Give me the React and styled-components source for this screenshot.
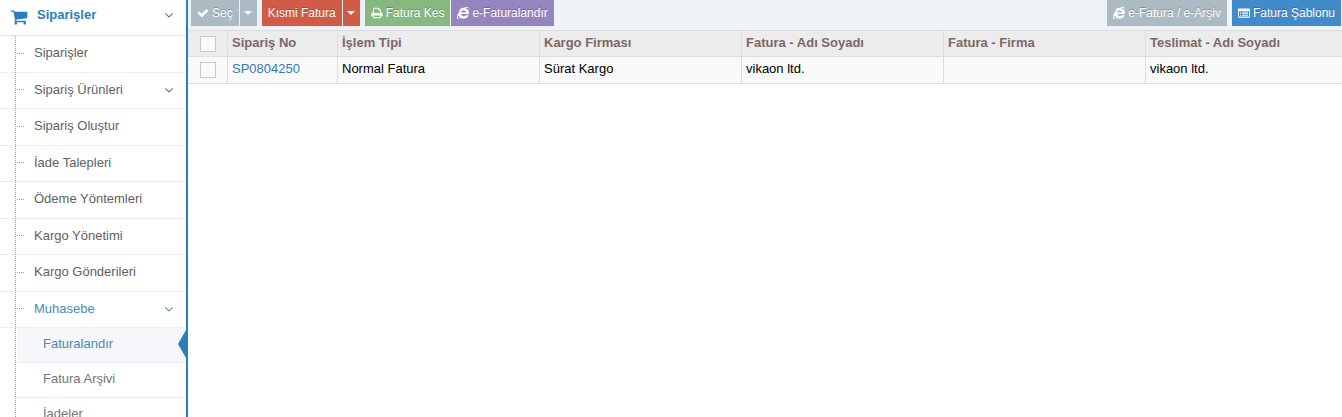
import React, { useState } from 'react';
import styled, { createGlobalStyle } from 'styled-components';
import { FaInternetExplorer } from 'react-icons/fa';

const GlobalStyle = createGlobalStyle`
  * {
    box-sizing: border-box;
  }

  body {
    margin: 0;
    background: #fff;
    color: #000;
    font-family: 'Liberation Sans', Arial, sans-serif;
    font-size: 13px;
    line-height: 20px;
  }
`;

const Page = styled.div`
  display: flex;
  height: 100vh;
  overflow: hidden;
`;

const Svg = styled.svg`
  width: ${({ $size }) => $size}px;
  height: ${({ $size }) => $size}px;
  fill: currentColor;
  flex-shrink: 0;
`;

const Sidebar = styled.nav`
  flex: 0 0 188px;
  border-right: 2px solid #2b7dbc;
  overflow: hidden;
`;

const SidebarHeader = styled.a`
  display: flex;
  align-items: center;
  gap: 9px;
  height: 36px;
  padding: 0 10px 6px;
  border-bottom: 1px solid #e5e5e5;
  color: #2b7dbc;
  font-weight: 700;
  text-decoration: none;
`;

const HeaderIcon = styled.span`
  display: flex;
  padding-top: 4px;
`;

const MenuLabel = styled.span`
  flex: 1;
`;

const Menu = styled.ul`
  position: relative;
  margin: 0;
  padding: 0;
  list-style: none;

  &::before {
    content: '';
    position: absolute;
    top: 0;
    bottom: 0;
    left: 15px;
    border-left: 1px dotted #7fa9ca;
  }
`;

const MenuItem = styled.li`
  &:nth-child(odd) > a {
    height: 37px;
  }
`;

const MenuLink = styled.a`
  display: flex;
  align-items: center;
  height: 36px;
  padding: 0 10px 2px 17px;
  border-bottom: 1px dotted #e0e0e0;
  color: ${({ $active }) => ($active ? '#4b88b7' : '#616161')};
  text-decoration: none;

  &::before {
    content: '';
    width: 7px;
    margin-right: 10px;
    border-top: 1px dotted #7fa9ca;
  }

  &:hover {
    color: #4b88b7;
  }
`;

const SubMenu = styled.ul`
  margin: 0 0 0 17px;
  padding: 0;
  list-style: none;
`;

const SubLink = styled.a`
  position: relative;
  display: flex;
  align-items: center;
  height: 35px;
  padding: 0 0 2px 26px;
  border-bottom: 1px dotted #e0e0e0;
  background: ${({ $active }) => ($active ? '#f5f7fa' : '#fff')};
  color: ${({ $active }) => ($active ? '#4b88b7' : '#757575')};
  text-decoration: none;
`;

const ActiveArrow = styled.span`
  position: absolute;
  top: 2px;
  right: 0;
  border-style: solid;
  border-width: 14px 8px 14px 0;
  border-color: transparent #2b7dbc;
`;

const Content = styled.main`
  flex: 1;
  min-width: 0;
  overflow: hidden;
`;

const Toolbar = styled.div`
  display: flex;
  justify-content: space-between;
  height: 30px;
  padding: 0 1px 4px 3px;
  background: #eff3f8;
`;

const ToolGroup = styled.div`
  display: flex;
  gap: 5px;
`;

const ButtonGroup = styled.div`
  display: flex;
  gap: 1px;
`;

const Button = styled.button`
  display: flex;
  align-items: center;
  gap: 3px;
  height: 26px;
  padding: 0 6px;
  border: 0;
  background: ${({ $color }) => $color};
  color: #fff;
  font: 12px 'Liberation Sans', Arial, sans-serif;
  text-shadow: 0 -1px 0 rgba(0, 0, 0, 0.25);
  white-space: nowrap;
  cursor: pointer;

  &:hover {
    filter: brightness(0.92);
  }
`;

const CaretButton = styled(Button)`
  justify-content: center;
  width: 17px;
  padding: 0;
`;

const Caret = styled.span`
  border-style: solid;
  border-width: 4px 4px 0;
  border-color: #fff transparent;
`;

const Table = styled.table`
  width: 100%;
  border-collapse: separate;
  border-spacing: 0;
  border-top: 1px solid #ddd;
  table-layout: fixed;
`;

const Col = styled.col`
  width: ${({ $width }) => ($width ? `${$width}px` : 'auto')};
`;

const HeadCell = styled.th`
  height: 26px;
  padding: 0 4px 2px;
  border-right: 1px solid #ddd;
  border-bottom: 1px solid #ddd;
  background: #ececec;
  color: #7d6767;
  text-align: left;
  white-space: nowrap;

  &:last-child {
    border-right: 0;
  }
`;

const Cell = styled.td`
  height: 27px;
  padding: 0 4px 2px;
  border-right: 1px solid #ddd;
  border-bottom: 1px solid #ddd;
  background: #f9f9f9;
  white-space: nowrap;

  &:last-child {
    border-right: 0;
  }
`;

const CheckLabel = styled.label`
  display: flex;
  justify-content: center;
  padding-top: 2px;
`;

const Checkbox = styled.input`
  appearance: none;
  width: 16px;
  height: 16px;
  margin: 0;
  border: 1px solid #c8c8c8;
  background: #fafafa;
  cursor: pointer;

  &:checked {
    background: #32a3ce;
  }
`;

const OrderLink = styled.a`
  color: #337ab7;
  text-decoration: none;
`;

const icons = {
  cart: 'M704 1536q0 52-38 90t-90 38-90-38-38-90 38-90 90-38 90 38 38 90zm896 0q0 52-38 90t-90 38-90-38-38-90 38-90 90-38 90 38 38 90zm128-1088v512q0 24-16.5 42.5t-40.5 21.5l-1044 122q13 60 13 70 0 16-24 64h920q26 0 45 19t19 45-19 45-45 19h-1024q-26 0-45-19t-19-45q0-11 8-31.5t16-36 21.5-40 15.5-29.5l-177-823h-204q-26 0-45-19t-19-45 19-45 45-19h256q16 0 28.5 6.5t19.5 15.5 13 24.5 8 26 5.5 29.5 4.5 26h1201q26 0 45 19t19 45z',
  angle: 'M1395 736q0 13-10 23l-466 466q-10 10-23 10t-23-10l-466-466q-10-10-10-23t10-23l50-50q10-10 23-10t23 10l393 393 393-393q10-10 23-10t23 10l50 50q10 10 10 23z',
  check: 'M1671 566q0 40-28 68l-724 724-136 136q-28 28-68 28t-68-28l-136-136-362-362q-28-28-28-68t28-68l136-136q28-28 68-28t68 28l294 295 656-657q28-28 68-28t68 28l136 136q28 28 28 68z',
  print: 'M448 1536h896v-256h-896v256zm0-640h896v-384h-160q-40 0-68-28t-28-68v-160h-640v640zm1152 64q0-26-19-45t-45-19-45 19-19 45 19 45 45 19 45-19 19-45zm128 0v416q0 13-9.5 22.5t-22.5 9.5h-224v160q0 40-28 68t-68 28h-960q-40 0-68-28t-28-68v-160h-224q-13 0-22.5-9.5t-9.5-22.5v-416q0-79 56.5-135.5t135.5-56.5h64v-544q0-40 28-68t68-28h672q40 0 88 20t76 48l152 152q28 28 48 76t20 88v256h64q79 0 135.5 56.5t56.5 135.5z',
  list: 'M160 224h1472q160 0 160 160v1056q0 160-160 160H160Q0 1600 0 1440V384Q0 224 160 224zM149 597v810q0 32 32 32h1430q32 0 32-32V597zM299 672h149v149H299zM597 672h896v149H597zM299 950h149v149H299zM597 950h896v149H597zM299 1220h149v149H299zM597 1220h896v149H597z',
};

const Icon = ({ name, size }) => (
  <Svg viewBox="0 0 1792 1792" $size={size} aria-hidden="true">
    <path d={icons[name]} fillRule={name === 'list' ? 'evenodd' : 'nonzero'} />
  </Svg>
);

const menuItems = [
  { label: 'Siparişler' },
  { label: 'Sipariş Ürünleri', expandable: true },
  { label: 'Sipariş Oluştur' },
  { label: 'İade Talepleri' },
  { label: 'Ödeme Yöntemleri' },
  { label: 'Kargo Yönetimi' },
  { label: 'Kargo Gönderileri' },
  {
    label: 'Muhasebe',
    expandable: true,
    active: true,
    children: ['Faturalandır', 'Fatura Arşivi', 'İadeler'],
  },
];

const columns = [
  { label: 'Sipariş No', width: 110 },
  { label: 'İşlem Tipi', width: 202 },
  { label: 'Kargo Firması', width: 202 },
  { label: 'Fatura - Adı Soyadı', width: 202 },
  { label: 'Fatura - Firma', width: 202 },
  { label: 'Teslimat - Adı Soyadı' },
];

const orders = [
  {
    id: 'SP0804250',
    type: 'Normal Fatura',
    cargo: 'Sürat Kargo',
    billingName: 'vikaon ltd.',
    billingCompany: '',
    shippingName: 'vikaon ltd.',
  },
];

const App = () => {
  const [selected, setSelected] = useState([]);
  const [activePage, setActivePage] = useState('Faturalandır');

  const toggleOrder = (id) => {
    setSelected(selected.includes(id) ? selected.filter(item => item !== id) : [...selected, id]);
  };

  const toggleAll = (e) => {
    setSelected(e.target.checked ? orders.map(order => order.id) : []);
  };

  return (
    <Page>
      <GlobalStyle />
      <Sidebar>
        <SidebarHeader href="#">
          <HeaderIcon><Icon name="cart" size={18} /></HeaderIcon>
          <MenuLabel>Siparişler</MenuLabel>
          <Icon name="angle" size={14} />
        </SidebarHeader>
        <Menu>
          {menuItems.map(item => (
            <MenuItem key={item.label}>
              <MenuLink href="#" $active={item.active}>
                <MenuLabel>{item.label}</MenuLabel>
                {item.expandable && <Icon name="angle" size={14} />}
              </MenuLink>
              {item.children && (
                <SubMenu>
                  {item.children.map(child => (
                    <li key={child}>
                      <SubLink
                        href="#"
                        $active={child === activePage}
                        onClick={() => setActivePage(child)}
                      >
                        {child}
                        {child === activePage && <ActiveArrow />}
                      </SubLink>
                    </li>
                  ))}
                </SubMenu>
              )}
            </MenuItem>
          ))}
        </Menu>
      </Sidebar>

      <Content>
        <Toolbar>
          <ToolGroup>
            <ButtonGroup>
              <Button $color="#abbac3"><Icon name="check" size={12} /> Seç</Button>
              <CaretButton $color="#abbac3" aria-label="Seçim menüsü"><Caret /></CaretButton>
            </ButtonGroup>
            <ButtonGroup>
              <Button $color="#d15b47">Kısmi Fatura</Button>
              <CaretButton $color="#d15b47" aria-label="Fatura menüsü"><Caret /></CaretButton>
            </ButtonGroup>
            <ButtonGroup>
              <Button $color="#87b87f"><Icon name="print" size={12} /> Fatura Kes</Button>
              <Button $color="#9585bf"><FaInternetExplorer size={12} /> e-Faturalandır</Button>
            </ButtonGroup>
          </ToolGroup>
          <ToolGroup>
            <Button $color="#abbac3"><FaInternetExplorer size={12} /> e-Fatura / e-Arşiv</Button>
            <Button $color="#428bca"><Icon name="list" size={12} /> Fatura Şablonu</Button>
          </ToolGroup>
        </Toolbar>

        <Table>
          <colgroup>
            <Col $width={40} />
            {columns.map(col => <Col key={col.label} $width={col.width} />)}
          </colgroup>
          <thead>
            <tr>
              <HeadCell>
                <CheckLabel>
                  <Checkbox
                    type="checkbox"
                    aria-label="Tümünü seç"
                    checked={selected.length === orders.length}
                    onChange={toggleAll}
                  />
                </CheckLabel>
              </HeadCell>
              {columns.map(col => <HeadCell key={col.label}>{col.label}</HeadCell>)}
            </tr>
          </thead>
          <tbody>
            {orders.map(order => (
              <tr key={order.id}>
                <Cell>
                  <CheckLabel>
                    <Checkbox
                      type="checkbox"
                      aria-label={order.id}
                      checked={selected.includes(order.id)}
                      onChange={() => toggleOrder(order.id)}
                    />
                  </CheckLabel>
                </Cell>
                <Cell><OrderLink href="#">{order.id}</OrderLink></Cell>
                <Cell>{order.type}</Cell>
                <Cell>{order.cargo}</Cell>
                <Cell>{order.billingName}</Cell>
                <Cell>{order.billingCompany}</Cell>
                <Cell>{order.shippingName}</Cell>
              </tr>
            ))}
          </tbody>
        </Table>
      </Content>
    </Page>
  );
};

export default App;
